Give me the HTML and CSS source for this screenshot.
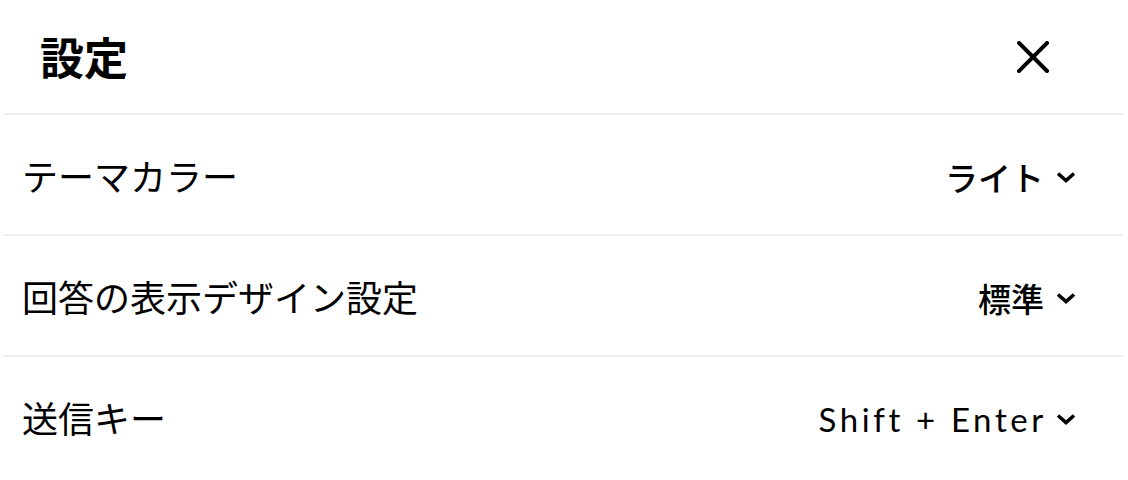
FILE: index.html
```html
<!DOCTYPE html>
<html lang="ja">
<head>
    <meta charset="UTF-8">
    <meta name="viewport" content="width=device-width, initial-scale=1.0">
    <title>設定</title>
    <link rel="stylesheet" href="styles.css">
</head>
<body>

<div class="settings">
    <div class="settings-header">
        <h1 class="settings-title">設定</h1>
        <button class="close-button" aria-label="閉じる">
            <svg width="32" height="32" viewBox="0 0 32 32">
                <path d="M2 2 L30 30 M30 2 L2 30" stroke="#000" stroke-width="4" stroke-linecap="square" fill="none"/>
            </svg>
        </button>
    </div>

    <div class="setting-row">
        <span class="setting-label">テーマカラー</span>
        <button class="setting-value">
            <span>ライト</span>
            <svg class="chevron" width="20" height="12" viewBox="0 0 20 12">
                <path d="M2 2.5 L10 9.5 L18 2.5" stroke="#000" stroke-width="3.6" fill="none"/>
            </svg>
        </button>
    </div>

    <div class="setting-row">
        <span class="setting-label">回答の表示デザイン設定</span>
        <button class="setting-value">
            <span>標準</span>
            <svg class="chevron" width="20" height="12" viewBox="0 0 20 12">
                <path d="M2 2.5 L10 9.5 L18 2.5" stroke="#000" stroke-width="3.6" fill="none"/>
            </svg>
        </button>
    </div>

    <div class="setting-row last">
        <span class="setting-label">送信キー</span>
        <button class="setting-value latin">
            <span>Shift + Enter</span>
            <svg class="chevron" width="20" height="12" viewBox="0 0 20 12">
                <path d="M2 2.5 L10 9.5 L18 2.5" stroke="#000" stroke-width="3.6" fill="none"/>
            </svg>
        </button>
    </div>
</div>

</body>
</html>
```

FILE: styles.css
```css
body {
    margin: 0;
    background-color: #fff;
    font-family: Lato, "Noto Sans CJK JP", sans-serif;
    color: #000;
}
.settings {
    margin: 0 5px 0 3px;
}
/* Header with title and close button */
.settings-header {
    display: flex;
    align-items: center;
    justify-content: space-between;
    height: 113px;
    padding: 0 74px 0 37px;
    border-bottom: 2px solid #eeeeee;
}
.settings-title {
    margin: 0;
    font-size: 44px;
    font-weight: 700;
    line-height: 1;
    padding-top: 2px;
}
.close-button {
    display: flex;
    padding: 0;
    border: none;
    background: none;
    cursor: pointer;
}
/* Setting rows */
.setting-row {
    display: flex;
    align-items: center;
    justify-content: space-between;
    height: 119px;
    padding: 0 47px 0 19px;
    border-bottom: 2px solid #eeeeee;
}
.setting-row.last {
    border-bottom: none;
}
.setting-label {
    font-size: 36px;
    line-height: 1;
    padding-top: 4px;
}
.setting-value {
    display: flex;
    align-items: center;
    gap: 12px;
    padding: 0;
    border: none;
    background: none;
    font-family: inherit;
    font-size: 33px;
    font-weight: 500;
    color: #000;
    cursor: pointer;
    padding-top: 4px;
}
.setting-value.latin {
    letter-spacing: 0.11em;
    font-weight: 400;
    gap: 9px;
}
.chevron {
    flex-shrink: 0;
    display: block;
}
```
